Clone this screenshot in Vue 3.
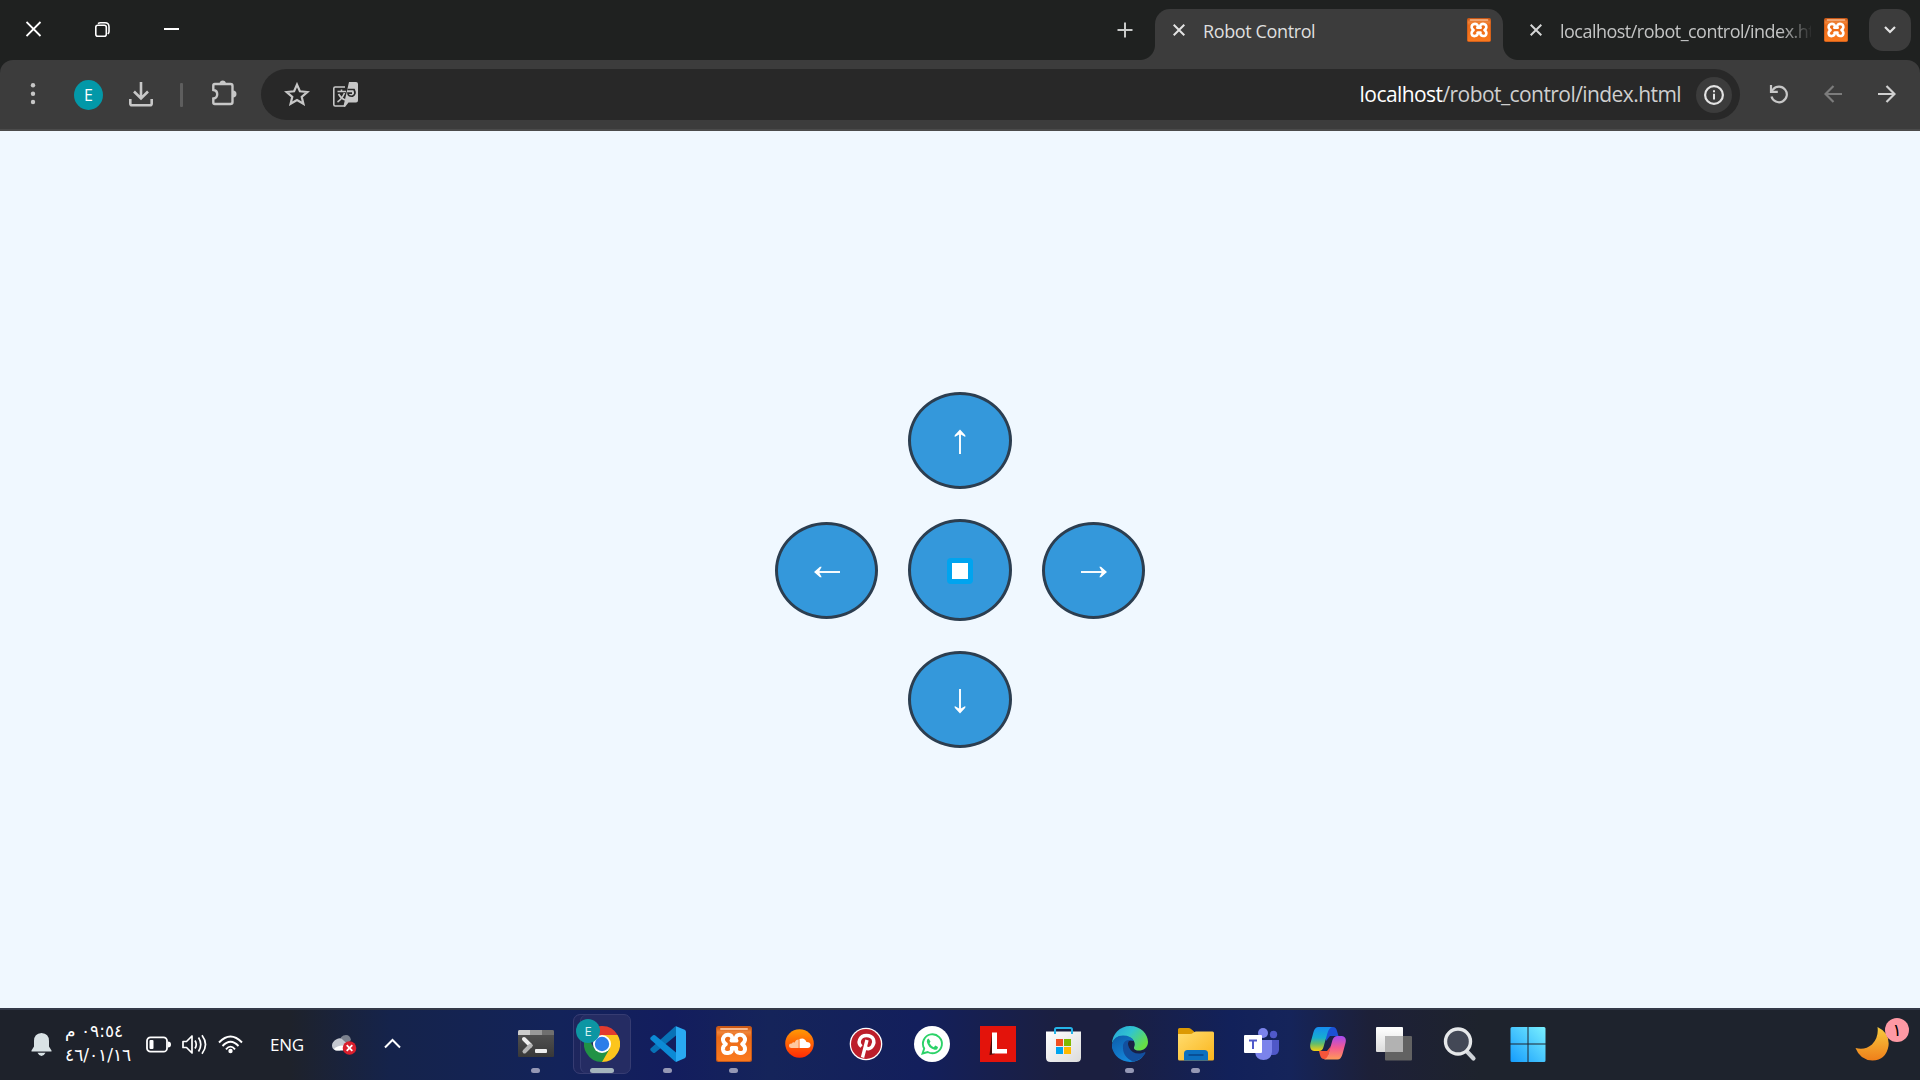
<script setup>
const apps = [
  { id: 'terminal', run: true },
  { id: 'chrome', run: true, active: true },
  { id: 'vscode', run: true },
  { id: 'xampp', run: true },
  { id: 'soundcloud' },
  { id: 'pinterest' },
  { id: 'whatsapp' },
  { id: 'lapp' },
  { id: 'store' },
  { id: 'edge', run: true },
  { id: 'folder', run: true },
  { id: 'teams' },
  { id: 'copilot' },
  { id: 'taskview' },
  { id: 'search' },
  { id: 'start' },
]
</script>

<template>
  <div class="screen">
    <svg class="defs" width="0" height="0">
      <defs>
        <linearGradient id="gx" x1="0" y1="0" x2="0" y2="1"><stop offset="0" stop-color="#c9500c" /><stop offset=".15" stop-color="#f0853a" /><stop offset=".3" stop-color="#ea6a18" /><stop offset="1" stop-color="#fb7a1f" /></linearGradient>
        <symbol id="xampp" viewBox="0 0 36 36">
          <rect width="36" height="36" rx="2.5" fill="#c4591b" />
          <rect x="1" y="1" width="34" height="34" rx="2" fill="url(#gx)" />
          <rect x="4" y="2" width="28" height="2" rx="1" fill="#f9b98c" />
          <path d="M18 14.600H15.500C17.500 12 15.500 8.800 12 8.800C8.500 8.800 6.800 11.500 7 14C7.200 16.200 8.500 17 9.800 18.100C7.600 19.500 6.800 21.500 7 23.500C7.400 26.300 9.500 27.300 12 27C15.500 26.600 16.500 24.500 15.800 22H20.200C19.500 24.500 20.500 26.600 24 27C26.500 27.300 28.700 26.300 29 23.500C29.200 21.500 28.400 19.500 26.200 18.100C27.700 17 28.800 16.200 29 14C29.200 11.500 27.500 8.800 24 8.800C20.500 8.800 18.500 12 20.500 14.600Z" fill="none" stroke="#fff" stroke-width="4" stroke-linejoin="round" />
        </symbol>
        <linearGradient id="gsc" x1="0" y1="0" x2="0" y2="1"><stop stop-color="#ff9a05" /><stop offset="1" stop-color="#ff2a05" /></linearGradient>
        <linearGradient id="gst" x1="0" y1="0" x2="1" y2="1"><stop stop-color="#fff" /><stop offset="1" stop-color="#dcdcdc" /></linearGradient>
        <linearGradient id="ge1" x1="0" y1="0" x2="1" y2=".6"><stop stop-color="#259fdc" /><stop offset=".5" stop-color="#31c5cf" /><stop offset="1" stop-color="#67df45" /></linearGradient>
        <linearGradient id="ge2" x1="0" y1="0" x2=".7" y2="1"><stop stop-color="#0c5ba9" /><stop offset="1" stop-color="#168fe2" /></linearGradient>
        <linearGradient id="gf" x1="0" y1="0" x2="1" y2="1"><stop stop-color="#ffdd70" /><stop offset="1" stop-color="#fbb51c" /></linearGradient>
        <linearGradient id="gw" gradientUnits="userSpaceOnUse" x1="0" y1="36" x2="36" y2="0"><stop stop-color="#149bfc" /><stop offset="1" stop-color="#7cf2ff" /></linearGradient>
        <linearGradient id="gc1" x1="0" y1="0" x2="0" y2="1"><stop stop-color="#168cf0" /><stop offset=".45" stop-color="#17aed0" /><stop offset=".7" stop-color="#65bd69" /><stop offset="1" stop-color="#f6cf10" /></linearGradient>
        <linearGradient id="gc2" x1="0" y1="0" x2="0" y2="1"><stop stop-color="#a34bf2" /><stop offset=".5" stop-color="#f45a91" /><stop offset="1" stop-color="#ff9a58" /></linearGradient>
        <linearGradient id="gmo" x1="0" y1="0" x2="0" y2="1"><stop stop-color="#f8cb3f" /><stop offset="1" stop-color="#ef7f1a" /></linearGradient>
        <linearGradient id="gtr" x1="0" y1="0" x2="0" y2="1"><stop stop-color="#555" /><stop offset="1" stop-color="#383838" /></linearGradient>
        <linearGradient id="gtv" x1="0" y1="0" x2="0" y2="1"><stop stop-color="#fff" /><stop offset="1" stop-color="#dcdcdc" /></linearGradient>
      </defs>
    </svg>

    <header class="tabs">
      <div class="win">
        <svg width="16" height="16" viewBox="0 0 16 16"><path d="M.5 1L14.500 15M14.500 1L.5 15" stroke="#fff" stroke-width="1.8" /></svg>
        <svg width="16" height="16" viewBox="0 0 16 16" fill="none" stroke="#fff" stroke-width="1.6"><rect x=".8" y="4.200" width="10.500" height="11" rx="2" /><path d="M3 2.600Q4 1.800 5.500 1.800H10Q14 1.800 14 5.800V10.500Q14 12 12.800 13" /></svg>
        <svg width="16" height="16" viewBox="0 0 16 16"><path d="M0 8H15" stroke="#fff" stroke-width="2" /></svg>
      </div>
      <svg class="plus" width="16" height="16" viewBox="0 0 16 16"><path d="M8 .5V15.500M.5 8H15.500" stroke="#c8cac9" stroke-width="2" /></svg>
      <div class="tab active">
        <svg class="x" width="12" height="12" viewBox="0 0 12 12"><path d="M.7 .7L11.300 11.300M11.300 .7L.7 11.300" stroke="#e3e3e3" stroke-width="2" /></svg>
        <span class="title">Robot Control</span>
        <svg class="fav" width="24" height="24"><use href="#xampp" /></svg>
      </div>
      <div class="tab">
        <svg class="x" width="12" height="12" viewBox="0 0 12 12"><path d="M.7 .7L11.300 11.300M11.300 .7L.7 11.300" stroke="#d5d6d6" stroke-width="2" /></svg>
        <span class="title fade">localhost/robot_control/index.html</span>
        <svg class="fav" width="24" height="24"><use href="#xampp" /></svg>
      </div>
      <div class="drop"><svg width="12" height="8" viewBox="0 0 12 8"><path d="M1 1L6 6L11 1" fill="none" stroke="#e3e3e3" stroke-width="2.200" /></svg></div>
    </header>

    <div class="toolwrap">
      <div class="toolbar">
        <svg class="dots" width="6" height="24" viewBox="0 0 6 24" fill="#c7c7c7"><circle cx="3" cy="3.300" r="2.200" /><circle cx="3" cy="11.700" r="2.200" /><circle cx="3" cy="20" r="2.200" /></svg>
        <div class="avatar">E</div>
        <svg class="dl" width="24" height="25" viewBox="0 0 24 25" fill="none" stroke="#c7c7c7" stroke-width="2.600"><path d="M12 0V15.500M5 9.500L12 16.500L19 9.500" /><path d="M1.300 17V21.500Q1.300 23.300 3 23.300H21Q22.700 23.300 22.700 21.500V17" /></svg>
        <i class="sep"></i>
        <svg class="ext" width="25" height="26" viewBox="0 0 25 26"><path d="M2.800 4H18.500Q20.500 4 20.500 6V22Q20.500 24 18.500 24H2.800Q1.300 24 1.300 22.500V18.500C6.500 18 6.500 10.500 1.300 10V5.500Q1.300 4 2.800 4Z" fill="none" stroke="#c7c7c7" stroke-width="2.400" /><path d="M7.500 3.500A3.300 3.500 0 0 1 14 3.500ZM21 10.500A3.400 3.400 0 0 1 21 17.500Z" fill="#c7c7c7" /></svg>
        <div class="omni">
          <svg class="star" width="26" height="24" viewBox="0 0 26 24"><path d="M13 2.600L15.900 9.300L23.300 10L17.700 14.800L19.400 21.800L13 18L6.600 21.800L8.300 14.800L2.700 10L10.100 9.300Z" fill="none" stroke="#c7c7c7" stroke-width="2.200" /></svg>
          <svg class="trans" width="25" height="25" viewBox="0 0 25 25"><path d="M12 5H2.200Q.8 5 .8 6.500V22.500Q.8 24 2.200 24H12" fill="none" stroke="#c7c7c7" stroke-width="1.600" /><path d="M4.500 9.500H13M8.500 7.500V9.500M5.500 12Q8 16.500 12 18M11.500 11Q9 17 4.500 20" stroke="#c7c7c7" stroke-width="1.600" fill="none" /><path d="M16 0H23Q25 0 25 2V18.500Q25 20.500 23 20.500H15.500L12 25L10.500 24Z" fill="#c7c7c7" /><path d="M14.500 7.500H21Q23.500 12.500 19.500 14.200Q15 14.500 15 11.200H19" fill="none" stroke="#282828" stroke-width="1.700" /></svg>
          <span class="url"><b>localhost</b>/robot_control/index.html</span>
          <span class="info"><svg width="20" height="20" viewBox="0 0 20 20"><circle cx="10" cy="10" r="8.900" fill="none" stroke="#e3e3e3" stroke-width="2.200" /><path d="M10 8.800V14.500M10 5.200V7.200" stroke="#e3e3e3" stroke-width="2" /></svg></span>
        </div>
        <svg class="reload" width="20" height="20" viewBox="0 0 20 20" fill="none" stroke="#c7c7c7" stroke-width="2.200"><path d="M2.500 12.500A7.800 7.800 0 1 0 4 5.500L2 7.500" /><path d="M2 1V7.800H8.800" /></svg>
        <svg class="back" width="18" height="18" viewBox="0 0 18 18" fill="none" stroke="#7c7c7c" stroke-width="2.200"><path d="M18 9H1.500M9.500 1L1.500 9L9.500 17" /></svg>
        <svg class="fwd" width="18" height="18" viewBox="0 0 18 18" fill="none" stroke="#d0d0d0" stroke-width="2.200"><path d="M0 9H16.500M8.500 1L16.500 9L8.500 17" /></svg>
      </div>
    </div>

    <main class="page">
      <div class="pad">
        <button class="up"><svg width="26" height="26" viewBox="0 0 26 26"><path d="M13 25V3" stroke="#fff" stroke-width="1.900" /><path d="M13 0.500L18.300 6.300V8L13 4.900L7.700 8V6.300Z" fill="#fff" /></svg></button>
        <button class="left"><svg width="26" height="26" viewBox="0 0 26 26"><path d="M26 13H3" stroke="#fff" stroke-width="1.900" /><path d="M0 13L6 7.700H7.700L4.900 13L7.700 18.300H6Z" fill="#fff" /></svg></button>
        <button class="stop"><i></i></button>
        <button class="right"><svg width="26" height="26" viewBox="0 0 26 26"><path d="M0 13H23" stroke="#fff" stroke-width="1.900" /><path d="M26 13L20 7.700H18.300L21.100 13L18.300 18.300H20Z" fill="#fff" /></svg></button>
        <button class="down"><svg width="26" height="26" viewBox="0 0 26 26"><path d="M13 1V23" stroke="#fff" stroke-width="1.900" /><path d="M13 25.500L18.300 19.700V18L13 21.100L7.700 18V19.700Z" fill="#fff" /></svg></button>
      </div>
    </main>

    <footer class="taskbar">
      <div class="tray">
        <svg class="bell" width="21" height="23" viewBox="0 0 21 23" fill="#d9e2e5"><path d="M10.500 0Q18 .5 18 8V13.500L20.500 17.500V18.500H.5V17.500L3 13.500V8Q3 .5 10.500 0ZM6.500 19.700H14.500Q13 22.800 10.500 23Q8 22.800 6.500 19.700Z" /></svg>
        <div class="clock"><span class="time" dir="rtl">٠٩:٥٤ م</span><span class="date">٤٦/٠١/١٦</span></div>
        <svg class="bat" width="25" height="17" viewBox="0 0 25 17"><rect x="1" y="1.300" width="20" height="14.400" rx="3.500" fill="none" stroke="#fff" stroke-width="1.800" /><rect x="3.500" y="4" width="4" height="9" rx="1" fill="#fff" /><path d="M22 5.500Q25 5.500 25 8.500Q25 11.500 22 11.500Z" fill="#fff" /></svg>
        <svg class="vol" width="25" height="21" viewBox="0 0 25 21" fill="none" stroke="#fff" stroke-width="1.700"><path d="M1 7.500H4.500L10 2V19L4.500 13.500H1Z" stroke-linejoin="round" /><path d="M13 6.500Q15.500 10.500 13 14.500M16.500 3.500Q21 10.500 16.500 17.500M20 1.200Q27 10.500 20 19.800" /></svg>
        <svg class="wifi" width="25" height="19" viewBox="0 0 25 19" fill="none" stroke="#fff" stroke-width="1.900"><path d="M1 7.500Q12.500-4.500 24 7.500M4.500 11Q12.500 2.500 20.500 11M8 14.300Q12.500 9 17 14.300" /><circle cx="12.500" cy="16" r="2.200" fill="#fff" stroke="none" /></svg>
        <span class="lang">ENG</span>
        <svg class="cloud" width="25" height="21" viewBox="0 0 25 21"><path d="M7 9Q8 1 14 1Q18 1 19 6L11 14Z" fill="#7b818e" /><path d="M5 5Q9 3 11.500 6.500L19 13H12L8 16.500H4Q0 15.500 0 11.500Q0 7.500 5 5Z" fill="#c4c8d0" /><path d="M2 15Q5 11.500 11 11.500V16.500H5Q3 16.500 2 15Z" fill="#fff" /><circle cx="17.500" cy="14" r="6.800" fill="#d91f2d" /><path d="M14.700 11.200L20.300 16.800M20.300 11.200L14.700 16.800" stroke="#fff" stroke-width="1.800" /></svg>
        <svg class="chev" width="17" height="11" viewBox="0 0 17 11"><path d="M1 9.500L8.500 2L16 9.500" fill="none" stroke="#fff" stroke-width="2" /></svg>
      </div>
      <nav class="apps">
        <div v-for="a in apps" :key="a.id" class="app" :class="{ active: a.active, run: a.run }">
          <svg v-if="a.id === 'terminal'" viewBox="0 0 36 36"><path d="M0 5.500Q0 4 1.500 4H34.500Q36 4 36 5.500V30Q36 31 35 31H1Q0 31 0 30Z" fill="url(#gtr)" /><path d="M0 9V5.500Q0 4 1.500 4H12V9Z" fill="#cdcdcd" /><path d="M12 4H24V9H12Z" fill="#999" /><path d="M24 4H34.500Q36 4 36 5.500V9H24Z" fill="#6f6f6f" /><path d="M6 13L12.500 19.500" stroke="#eee" stroke-width="4" stroke-linecap="round" /><path d="M12.500 19.500L6.500 25.500" stroke="#b5b5b5" stroke-width="4" stroke-linecap="round" /><rect x="17" y="23" width="12" height="4" rx="1" fill="#eee" /></svg>
          <svg v-else-if="a.id === 'chrome'" viewBox="0 0 36 36"><path d="M18 18L2.410 9A18 18 0 0 1 33.590 9Z" fill="#e33b2e" /><path d="M18 18L33.590 9A18 18 0 0 1 18 36Z" fill="#fcc51d" /><path d="M18 9H33.590L25.800 22.500Z" fill="#fcc51d" /><path d="M18 36A18 18 0 0 1 2.410 9L10.200 22.500L25.800 22.500Z" fill="#219245" /><circle cx="18" cy="18" r="9" fill="#fff" /><circle cx="18" cy="18" r="7.200" fill="#2b7de9" /></svg>
          <svg v-else-if="a.id === 'vscode'" viewBox="0 0 36 36"><path d="M26 .3L34.700 3.800Q36 4.500 36 6V30Q36 31.500 34.700 32.200L26 36Z" fill="#29a9f2" /><path d="M26 9.500V0L24.500 1L.8 22.300Q-.3 23.500 .8 24.700L3 26.700Q4 27.300 5 26.700Z" fill="#0872b6" /><path d="M26 26.500V36L24.500 35L.8 13.700Q-.3 12.500 .8 11.300L3 9.300Q4 8.700 5 9.300Z" fill="#0c8ad5" /></svg>
          <svg v-else-if="a.id === 'xampp'"><use href="#xampp" /></svg>
          <svg v-else-if="a.id === 'soundcloud'" viewBox="0 0 36 36"><circle cx="17.500" cy="17.500" r="14.300" fill="url(#gsc)" /><path d="M17.500 13Q22.500 11 24.500 16Q28.500 16 28.500 19Q28.500 22 25.500 22H17.500Z" fill="#fff" /><path d="M16.700 13.500Q13.500 13.500 12.800 16.500Q10.500 15.500 10 17.500Q7 17 7 19.500Q7 22 9.500 22H16.700Z" fill="#ffc9a0" /></svg>
          <svg v-else-if="a.id === 'pinterest'" viewBox="0 0 36 36"><circle cx="18" cy="18" r="16.300" fill="#fff" /><circle cx="18" cy="18" r="15" fill="#bd1f2b" /><path d="M13.500 20.500C9 17 11.500 9.500 18.500 9.500C25.500 9.500 27.500 15.500 24.500 20C22.500 23.500 18 23.500 17.500 20.500M19 14L14.500 31.500" fill="none" stroke="#fff" stroke-width="3.400" /></svg>
          <svg v-else-if="a.id === 'whatsapp'" viewBox="0 0 36 36"><circle cx="18" cy="18" r="18" fill="#fff" /><path d="M8.500 27.500L10.200 22.500A9.500 9.500 0 1 1 13.700 26Z" fill="none" stroke="#2bd268" stroke-width="1.900" /><path d="M14.500 12.500L16.500 15.500L15.500 17.300Q17 20 19.800 21.200L21.300 19.500L24 21Q23.500 24.300 20.500 23.800Q14 22 12.800 15.500Q12.800 13 14.500 12.500Z" fill="#2bd268" /></svg>
          <svg v-else-if="a.id === 'lapp'" viewBox="0 0 36 36"><rect width="36" height="36" fill="#e3130b" /><path d="M12 8L9.500 29L15 28Z" fill="#4a0906" /><path d="M12 6.500H17V23H27V27.500H12Z" fill="#fff" /></svg>
          <svg v-else-if="a.id === 'store'" viewBox="0 0 36 36"><path d="M0 5.500H35V31.500Q35 36 30.500 36H4.500Q0 36 0 31.500Z" fill="url(#gst)" /><path d="M9 8V3.500Q9 2 10.500 2H24.500Q26 2 26 3.500V8" fill="none" stroke="#25b4e8" stroke-width="2" /><path d="M10 13H17V20H10Z" fill="#f25022" /><path d="M18 13H25V20H18Z" fill="#7fba00" /><path d="M10 21H17V28H10Z" fill="#00a4ef" /><path d="M18 21H25V28H18Z" fill="#ffb900" /></svg>
          <svg v-else-if="a.id === 'edge'" viewBox="0 0 36 36"><path d="M0 18C0 8 8 0 18 0C29 0 36 8 36 16C36 22 31 24.500 27 24.500C22.500 24.500 21 22.500 22.500 20C24 16 20 10 11 10C5 10 1 14 0 18Z" fill="url(#ge1)" /><path d="M0 18Q2 9.500 11 9.500Q19 9.500 22 15Q14 13 12.500 20Q12 31 25 32.500Q29 32 32.500 28Q28 36 18 36Q4 35 0 22Z" fill="url(#ge2)" /><path d="M11 19Q12.500 13.500 18 14Q14.500 16.500 17 21.500Q20 28 28 27.500Q31 27 33 26Q34 26.500 33 28Q28 35 21 35.500Q10 31 11 19Z" fill="#124f9e" /></svg>
          <svg v-else-if="a.id === 'folder'" viewBox="0 0 36 36"><path d="M0 3.500Q0 2 1.500 2H10.500Q12 2 13 3L16 5.500V10H0Z" fill="#dc9903" /><path d="M0 8H12Q14 8 15.500 6.500Q17 5.500 18 5.500H34.500Q36 5.500 36 7V33Q36 34.500 34.500 34.500H1.500Q0 34.500 0 33Z" fill="url(#gf)" /><path d="M6 34.500V27.500Q6 24 9.500 24H26.500Q30 24 30 27.500V34.500Z" fill="#0c70c0" /><path d="M10.500 29H25.500" stroke="#084c91" stroke-width="1.800" /></svg>
          <svg v-else-if="a.id === 'teams'" viewBox="0 0 36 36"><circle cx="29.500" cy="8.500" r="3.700" fill="#5059c9" /><path d="M25 14H35V24Q34.500 29 29.500 29H25Z" fill="#4f58c8" /><circle cx="19" cy="7" r="5" fill="#7b83eb" /><path d="M11 14H28V26Q27 34 19.500 34Q12 34 11 26Z" fill="#7b83eb" /><rect y="9" width="18" height="18" rx="1" fill="#fff" /><path d="M5 14.500H13M9 14.500V23" stroke="#5059c9" stroke-width="2" /></svg>
          <svg v-else-if="a.id === 'copilot'" viewBox="0 0 36 36"><path d="M16 1H23Q26 1 27 5L28.500 10H20L16 15Z" fill="#1b51d5" /><path d="M9 25H17L21 20L17.500 32Q16.500 33.500 14 33Q11 33 10 29Z" fill="#f4553a" /><path d="M8.500 1H22Q19 2 17.500 7L13.500 21Q12.500 25 9 25H4Q-1 24 .5 17L3.500 6Q5 1 8.500 1Z" fill="url(#gc1)" /><path d="M27.500 33.500H14Q17 32.500 18.500 28L22.500 14Q24 10 27.500 10H32Q37 11 35.500 17L32.500 28Q31 33.500 27.500 33.500Z" fill="url(#gc2)" /></svg>
          <svg v-else-if="a.id === 'taskview'" viewBox="0 0 36 36"><rect y="1" width="27" height="25" rx="1" fill="url(#gtv)" /><rect x="9" y="10" width="27" height="24.500" rx="1" fill="#626262" /><rect x="9" y="10" width="18" height="16" fill="#b2b2b2" /></svg>
          <svg v-else-if="a.id === 'search'" viewBox="0 0 36 36"><path d="M24 24.500L31.500 32.500" stroke="#cfd3d8" stroke-width="4.200" stroke-linecap="round" /><circle cx="16" cy="15.500" r="12.500" fill="#434856" stroke="#e6e8ea" stroke-width="3.400" /></svg>
          <svg v-else class="start" viewBox="0 0 36 36"><path d="M.5 2.500Q.5 1 2 1H17.500V17.500H.5ZM18.500 1H34Q35.500 1 35.500 2.500V17.500H18.500ZM.5 18.500H17.500V36H2Q.5 36 .5 34.500ZM18.500 18.500H35.500V34.500Q35.500 36 34 36H18.500Z" fill="url(#gw)" /></svg>
          <span v-if="a.active" class="badge">E</span>
        </div>
      </nav>
      <div class="weather">
        <svg width="34" height="34" viewBox="0 0 34 34"><path d="M22.500 0Q35 6 33.500 19Q31 33 17.500 33.500Q5 33 .5 21Q10 23.500 17 17.500Q24 10.500 22.500 0Z" fill="url(#gmo)" /></svg>
        <span class="count">١</span>
      </div>
    </footer>
  </div>
</template>

<style>
body { margin: 0; overflow: hidden; }
</style>

<style scoped>
.screen { width: 1920px; height: 1080px; display: flex; flex-direction: column; font-family: "Open Sans", "Noto Sans", "DejaVu Sans", sans-serif; overflow: hidden; }
.defs { position: absolute; }
svg { flex: none; display: block; }
.tabs { height: 60px; background: #1f2120; display: flex; align-items: flex-start; flex: none; }
.win { display: flex; gap: 53px; margin: 21px 0 0 26px; width: 1091px; flex: none; }
.plus { margin-top: 22px; }
.tab { box-sizing: border-box; height: 51px; margin-top: 9px; width: 348px; display: flex; align-items: center; padding: 0 12px 9px 18px; position: relative; color: #c3c4c4; flex: none; }
.tab.active { margin-left: 22px; background: #3c3c3c; border-radius: 15px 15px 0 0; color: #dfdfdf; }
.tab.active::before, .tab.active::after { content: ""; position: absolute; bottom: 0; width: 15px; height: 15px; }
.tab.active::before { left: -15px; background: radial-gradient(circle at 0 0, transparent 14.5px, #3c3c3c 15.5px); }
.tab.active::after { right: -15px; background: radial-gradient(circle at 100% 0, transparent 14.5px, #3c3c3c 15.5px); }
.tab:not(.active) { padding-left: 27px; padding-right: 3px; }
.title { font-size: 18px; line-height: 24px; margin: 2px 0 0 18px; width: 251px; white-space: nowrap; overflow: hidden; letter-spacing: -0.38px; }
.fav { margin-left: auto; }
.fade { letter-spacing: -0.52px; -webkit-mask-image: linear-gradient(90deg, #000 88%, transparent 101%); mask-image: linear-gradient(90deg, #000 88%, transparent 101%); }
.drop { width: 42px; height: 42px; margin: 9px 0 0 18px; border-radius: 14px; background: #3c3c3c; display: flex; align-items: center; justify-content: center; }
.toolwrap { background: #1f2120; flex: none; }
.toolbar { box-sizing: border-box; height: 71px; background: #3c3c3c; border-radius: 13px 13px 0 0; border-bottom: 2px solid #4b4b4b; display: flex; align-items: center; }
.toolbar > svg:not(.ext) { margin-top: -1px; }
.dots { margin-left: 30px; }
.avatar { width: 29px; height: 30px; border-radius: 50%; background: #0398a8; color: #fff; font-size: 16px; line-height: 30px; text-align: center; margin-left: 38px; }
.dl { margin-left: 26px; }
.sep { width: 3px; height: 24px; background: #5e5e5e; margin-left: 27px; border-radius: 1px; }
.ext { margin-left: 29px; margin-top: -3px; }
.omni { width: 1479px; height: 51px; border-radius: 26px; background: #282828; margin-left: 24px; display: flex; align-items: center; flex: none; }
.star { margin: -2px 0 0 23px; }
.trans { margin-left: 23px; }
.url { margin: -1px 0 0 auto; font-size: 21px; color: #cfcfcf; letter-spacing: -0.57px; white-space: nowrap; }
.url b { font-weight: 400; color: #fff; }
.info { width: 36px; height: 36px; border-radius: 50%; background: #3c3c3c; display: flex; align-items: center; justify-content: center; margin: 0 8px 0 15px; }
.reload { margin-left: 29px; }
.back { margin-left: 35px; }
.fwd { margin-left: 36px; }
.page { flex: 1; background: #f0f8ff; display: flex; align-items: center; justify-content: center; padding-top: 1px; box-sizing: border-box; }
.pad { display: grid; grid-template-columns: 103px 104px 103px; grid-template-rows: 97px 102px 97px; gap: 30px; grid-template-areas: ". up ." "left stop right" ". down ."; }
.pad button { box-sizing: border-box; border: 3px solid #2c3e50; border-radius: 50%; background: #3498db; width: 100%; height: 97px; padding: 2px 0 0; display: flex; align-items: center; justify-content: center; }
.pad .up { grid-area: up; }
.pad .left { grid-area: left; align-self: start; margin-top: 3px; }
.pad .right { grid-area: right; align-self: start; margin-top: 3px; }
.pad .down { grid-area: down; }
.pad .stop { grid-area: stop; height: 102px; }
.stop i { width: 16px; height: 16px; background: #fff; border: 5px solid #00a4ef; border-radius: 4px; }
.taskbar { box-sizing: border-box; height: 72px; flex: none; border-top: 2px solid #343a49; display: flex; align-items: center; background: linear-gradient(90deg, #1e222b 0, #1e222b 290px, #15234b 390px, #13235a 560px, #131d5e 670px, #15245a 770px, #131f5c 920px, #1b1f40 1060px, #1b1f40 1110px, #12215a 1230px, #15245a 1290px, #1d2038 1370px, #1e232d 1480px, #1e232d 100%); }
.tray { width: 503px; display: flex; align-items: center; flex: none; color: #fff; padding-bottom: 2px; box-sizing: border-box; }
.bell { margin-left: 31px; }
.clock { margin: -3px 0 0 13px; width: 57px; display: flex; flex-direction: column; font: 17px/24px "DejaVu Sans", sans-serif; white-space: nowrap; align-items: flex-start; }
.time { letter-spacing: -1px; }
.date { direction: ltr; letter-spacing: -1.3px; }
.bat { margin-left: 24px; }
.vol { margin-left: 11px; }
.wifi { margin-left: 11px; }
.lang { margin-left: 27px; width: 35px; font-size: 17px; letter-spacing: -0.3px; }
.cloud { margin-left: 27px; }
.chev { margin: -1px 0 0 27px; }
.apps { display: flex; height: 70px; align-items: center; }
.app { width: 66px; height: 70px; display: flex; align-items: center; justify-content: center; position: relative; }
.app > svg { width: 36px; height: 36px; margin-top: -2px; z-index: 1; }
.app > .start { margin-left: 3px; }
.app.run::after { content: ""; position: absolute; left: 28px; top: 58px; width: 9px; height: 5px; border-radius: 3px; background: #9598b5; }
.app.active::before { content: ""; position: absolute; left: 4px; top: 4px; width: 58px; height: 60px; box-sizing: border-box; border: 1px solid #363c72; border-radius: 7px; background: #252c63; box-shadow: inset 6px 0 #1e265d, inset 7px 0 #363c72; }
.app.active::after { left: 21px; width: 24px; background: #a5b5bd; }
.badge { position: absolute; z-index: 2; left: 7px; top: 9px; width: 24px; height: 24px; border-radius: 50%; background: #0d96a3; color: #d9f1f2; font-size: 13px; line-height: 24px; text-align: center; }
.weather { margin: -2px 31px 0 auto; position: relative; display: flex; width: 34px; }
.count { position: absolute; left: 30px; top: -9px; width: 24px; height: 24px; border-radius: 50%; background: #fe99a4; color: #000; font: 17px/24px "DejaVu Sans", sans-serif; text-align: center; }
</style>
